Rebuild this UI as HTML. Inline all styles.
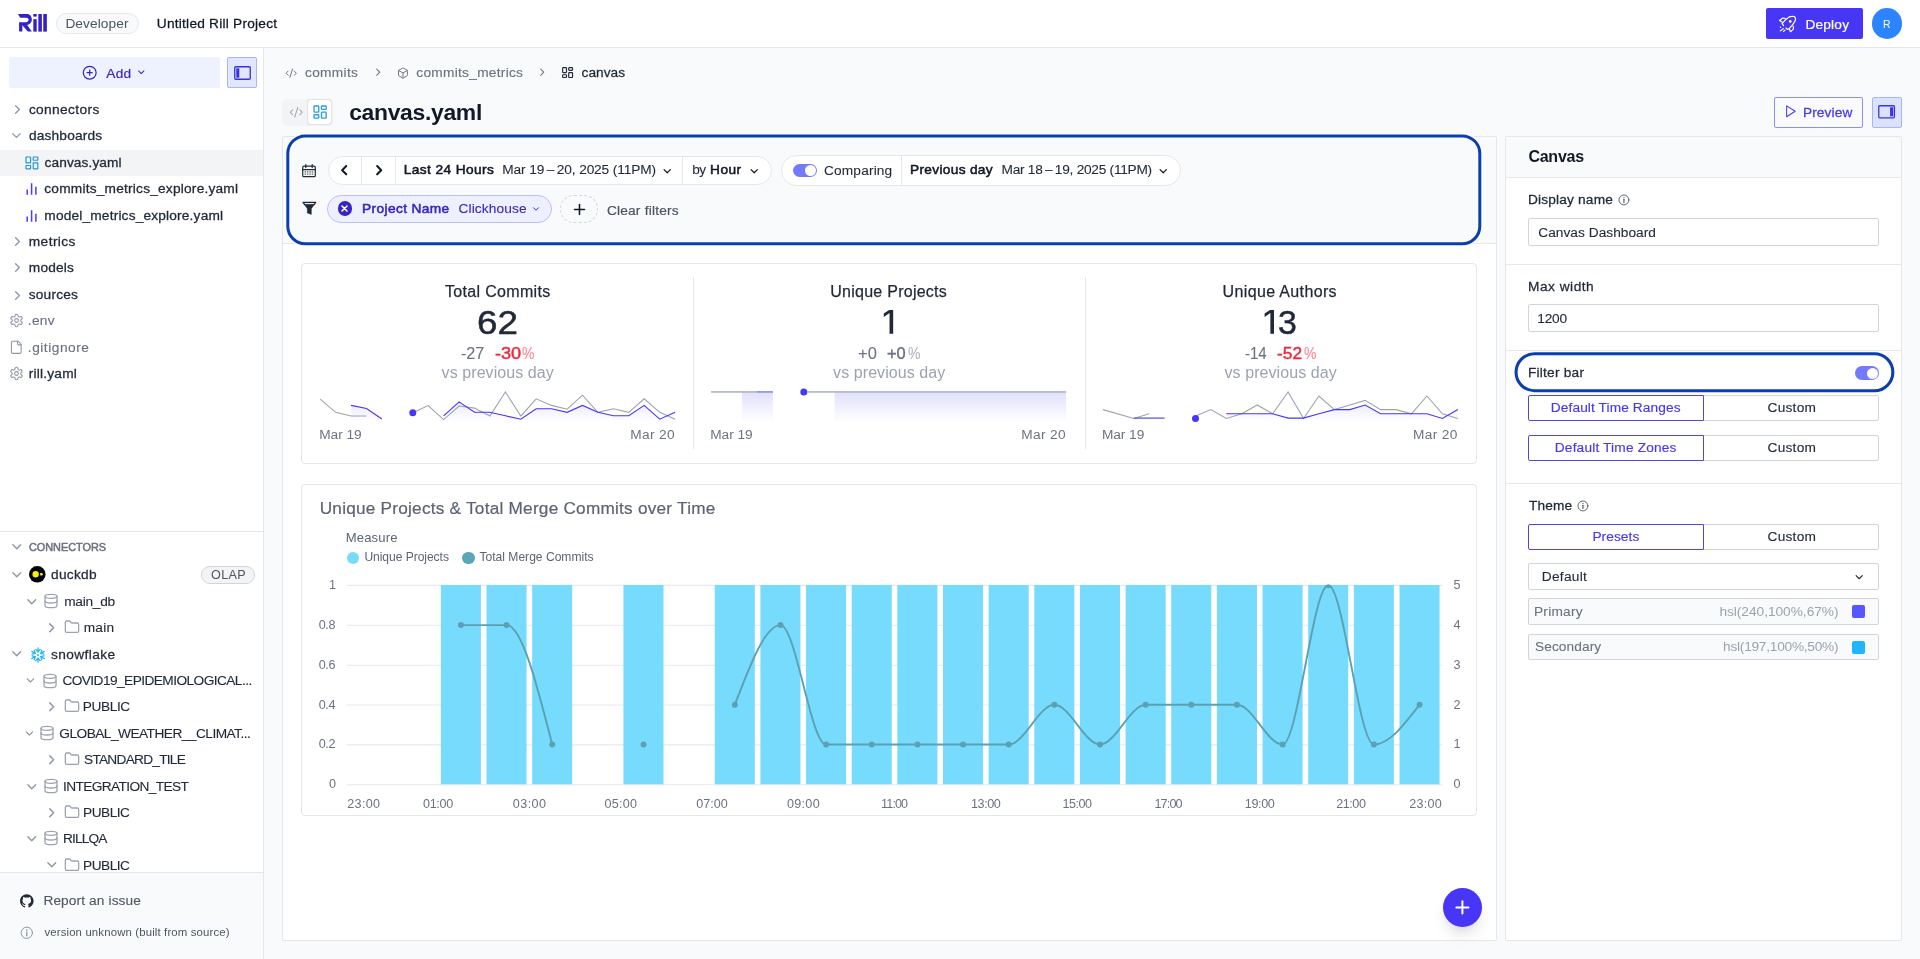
<!DOCTYPE html>
<html lang="en">
<head>
<meta charset="utf-8">
<title>Rill Developer - canvas.yaml</title>
<style>
*{box-sizing:border-box;margin:0;padding:0}
html,body{width:1920px;height:959px;overflow:hidden;background:#f9fafb;
font-family:"Liberation Sans",sans-serif;}
body{position:relative;will-change:transform}
div,span,svg,h1,h2,label,button,a,li,p{position:absolute;display:block}
.t{white-space:pre;}
svg{overflow:visible}
</style>
</head>
<body>
<!-- header -->
<div style="left:0px;top:0px;width:1920px;height:47px;background:#ffffff;"></div>
<div style="left:0px;top:47px;width:1920px;height:1px;background:#e5e7eb;"></div>
<svg style="left:18.07px;top:14.07px" width="28.88" height="17.63" viewBox="150 150 1065 650" fill="#3322c6"><path d="M150 150H480C600 150 660 250 660 360C660 450 600 530 490 560L660 800H510L310 565V800H190V450H460C510 450 540 410 540 365C540 320 510 290 460 290H230Z"/><rect x="715" y="150" width="125" height="95"/><rect x="715" y="340" width="125" height="460"/><rect x="900" y="150" width="130" height="650"/><rect x="1082" y="150" width="133" height="650"/></svg>
<div style="left:56.3px;top:13.3px;width:82.5px;height:21.2px;background:#f9fafb;border:1px solid #e5e7eb;border-radius:11px;"></div>
<span class="t" id="t0" style="font-size:13.7px;line-height:1;font-weight:400;color:#4b5563;top:17px;left:65.40px;letter-spacing:0.084px;">Developer</span>
<span class="t" id="t1" style="font-size:13.7px;line-height:1;font-weight:500;color:#111827;-webkit-text-stroke:0.26px #111827;top:17px;left:156.80px;letter-spacing:0.234px;">Untitled Rill Project</span>
<div style="left:1766px;top:8px;width:97px;height:31px;background:#4736f5;border-radius:2px;"></div>
<svg style="left:1774px;top:10px" width="30" height="26" viewBox="0 0 1107 959" fill="none" stroke="#fff" stroke-width="44" stroke-linecap="round" stroke-linejoin="round"><path d="M350 575L300 495Q420 340 560 255Q660 220 745 240Q800 280 795 350Q770 470 560 690L500 718L440 665"/><circle cx="600" cy="420" r="48" fill="#fff" stroke="none"/><path d="M300 440L205 385L310 305Q370 295 420 320"/><path d="M560 695L610 800L705 715Q735 650 700 590"/><circle cx="240" cy="640" r="28" fill="#fff" stroke="none"/><path d="M232 770L340 690M352 790L400 745"/></svg>
<span class="t" id="t2" style="font-size:13.7px;line-height:1;font-weight:500;color:#ffffff;-webkit-text-stroke:0.2px #ffffff;top:18px;left:1805.40px;letter-spacing:0.207px;">Deploy</span>
<div style="left:1871.7px;top:8px;width:30.8px;height:30.8px;background:#2d84ff;border-radius:16px;"></div>
<span class="t" id="t3" style="font-size:11.8px;line-height:1;font-weight:400;color:#ffffff;top:19px;left:1883.40px;transform-origin:0 0;transform:scaleX(0.8875);">R</span>
<!-- sidebar -->
<div style="left:0px;top:48px;width:263px;height:911px;background:#ffffff;"></div>
<div style="left:263px;top:48px;width:1px;height:911px;background:#e5e7eb;"></div>
<div style="left:9px;top:57.2px;width:211px;height:30.6px;background:#eef2ff;border-radius:2px;"></div>
<svg style="left:81.5px;top:65px;" width="15.4" height="15.4" viewBox="0 0 24 24" fill="none" stroke="#3524c7" stroke-width="1.9" stroke-linecap="round" stroke-linejoin="round"><circle cx="12" cy="12" r="10"/><path d="M8 12h8"/><path d="M12 8v8"/></svg>
<span class="t" id="t4" style="font-size:13.7px;line-height:1;font-weight:500;color:#3524c7;-webkit-text-stroke:0.2px #3524c7;top:67px;left:106.20px;letter-spacing:0.329px;">Add</span>
<svg style="left:135.5px;top:67.3px;" width="10.5" height="10.5" viewBox="0 0 24 24" fill="none" stroke="#3524c7" stroke-width="2.4" stroke-linecap="round" stroke-linejoin="round"><path d="m6 9 6 6 6-6"/></svg>
<div style="left:227px;top:57.2px;width:30px;height:30.6px;background:#e0e7ff;border:1px solid #a5b4fc;border-radius:2px;"></div>
<svg style="left:233.6px;top:65.6px" width="17" height="14" viewBox="0 0 17 14" fill="none" stroke="#3b2fe0" stroke-width="1.3"><rect x="0.75" y="0.75" width="15.5" height="12.5" rx="1"/><rect x="2.3" y="2.3" width="3" height="9.4" fill="#3b2fe0" stroke="none"/></svg>
<svg style="left:9.7px;top:102.0px;" width="15" height="15" viewBox="0 0 24 24" fill="none" stroke="#8f98a7" stroke-width="2.2" stroke-linecap="round" stroke-linejoin="round"><path d="m9 18 6-6-6-6"/></svg>
<span class="t" id="t5" style="font-size:13.7px;line-height:1;font-weight:500;color:#1f2937;-webkit-text-stroke:0.3px #1f2937;top:103px;left:28.90px;letter-spacing:0.388px;">connectors</span>
<svg style="left:9.3px;top:127.79999999999998px;" width="15" height="15" viewBox="0 0 24 24" fill="none" stroke="#8f98a7" stroke-width="2.2" stroke-linecap="round" stroke-linejoin="round"><path d="m6 9 6 6 6-6"/></svg>
<span class="t" id="t6" style="font-size:13.7px;line-height:1;font-weight:500;color:#1f2937;-webkit-text-stroke:0.3px #1f2937;top:129px;left:28.90px;letter-spacing:0.190px;">dashboards</span>
<div style="left:0px;top:150.2px;width:263px;height:25.6px;background:#f3f4f6;"></div>
<svg style="left:24.0px;top:154.6px;stroke-linejoin:miter;" width="15.8" height="15.8" viewBox="0 0 24 24" fill="none" stroke="#2395d8" stroke-width="1.8" stroke-linecap="round" stroke-linejoin="round"><rect width="7" height="9" x="3" y="3" rx="0.3"/><rect width="7" height="5" x="14" y="3" rx="0.3"/><rect width="7" height="9" x="14" y="12" rx="0.3"/><rect width="7" height="5" x="3" y="16" rx="0.3"/></svg>
<span class="t" id="t7" style="font-size:13.7px;line-height:1;font-weight:500;color:#1f2937;-webkit-text-stroke:0.3px #1f2937;top:156px;left:44.50px;letter-spacing:0.107px;">canvas.yaml</span>
<svg style="left:26px;top:182.0px" width="11" height="13" viewBox="0 0 11 13" fill="none" stroke="#4a3df5" stroke-width="1.5"><path d="M1.2 7.5v5.2M5.6 1.2v11.5M9.9 4.8v7.9"/></svg>
<span class="t" id="t8" style="font-size:13.7px;line-height:1;font-weight:500;color:#1f2937;-webkit-text-stroke:0.3px #1f2937;top:182px;left:44.30px;letter-spacing:0.217px;">commits_metrics_explore.yaml</span>
<svg style="left:26px;top:209.2px" width="11" height="13" viewBox="0 0 11 13" fill="none" stroke="#4a3df5" stroke-width="1.5"><path d="M1.2 7.5v5.2M5.6 1.2v11.5M9.9 4.8v7.9"/></svg>
<span class="t" id="t9" style="font-size:13.7px;line-height:1;font-weight:500;color:#1f2937;-webkit-text-stroke:0.3px #1f2937;top:209px;left:44.30px;letter-spacing:0.182px;">model_metrics_explore.yaml</span>
<svg style="left:9.7px;top:234.0px;" width="15" height="15" viewBox="0 0 24 24" fill="none" stroke="#8f98a7" stroke-width="2.2" stroke-linecap="round" stroke-linejoin="round"><path d="m9 18 6-6-6-6"/></svg>
<span class="t" id="t10" style="font-size:13.7px;line-height:1;font-weight:500;color:#1f2937;-webkit-text-stroke:0.3px #1f2937;top:235px;left:28.80px;letter-spacing:0.423px;">metrics</span>
<svg style="left:9.7px;top:260.4px;" width="15" height="15" viewBox="0 0 24 24" fill="none" stroke="#8f98a7" stroke-width="2.2" stroke-linecap="round" stroke-linejoin="round"><path d="m9 18 6-6-6-6"/></svg>
<span class="t" id="t11" style="font-size:13.7px;line-height:1;font-weight:500;color:#1f2937;-webkit-text-stroke:0.3px #1f2937;top:261px;left:28.80px;letter-spacing:0.184px;">models</span>
<svg style="left:9.7px;top:287.49999999999994px;" width="15" height="15" viewBox="0 0 24 24" fill="none" stroke="#8f98a7" stroke-width="2.2" stroke-linecap="round" stroke-linejoin="round"><path d="m9 18 6-6-6-6"/></svg>
<span class="t" id="t12" style="font-size:13.7px;line-height:1;font-weight:500;color:#1f2937;-webkit-text-stroke:0.3px #1f2937;top:288px;left:28.80px;letter-spacing:0.186px;">sources</span>
<svg style="left:9.1px;top:313.1px;" width="15" height="15" viewBox="0 0 24 24" fill="none" stroke="#8d96a4" stroke-width="1.7" stroke-linecap="round" stroke-linejoin="round"><path d="M12.22 2h-.44a2 2 0 0 0-2 2v.18a2 2 0 0 1-1 1.73l-.43.25a2 2 0 0 1-2 0l-.15-.08a2 2 0 0 0-2.73.73l-.22.38a2 2 0 0 0 .73 2.73l.15.1a2 2 0 0 1 1 1.72v.51a2 2 0 0 1-1 1.74l-.15.09a2 2 0 0 0-.73 2.73l.22.38a2 2 0 0 0 2.73.73l.15-.08a2 2 0 0 1 2 0l.43.25a2 2 0 0 1 1 1.73V20a2 2 0 0 0 2 2h.44a2 2 0 0 0 2-2v-.18a2 2 0 0 1 1-1.73l.43-.25a2 2 0 0 1 2 0l.15.08a2 2 0 0 0 2.73-.73l.22-.39a2 2 0 0 0-.73-2.73l-.15-.08a2 2 0 0 1-1-1.74v-.5a2 2 0 0 1 1-1.74l.15-.09a2 2 0 0 0 .73-2.73l-.22-.38a2 2 0 0 0-2.73-.73l-.15.08a2 2 0 0 1-2 0l-.43-.25a2 2 0 0 1-1-1.73V4a2 2 0 0 0-2-2z"/><circle cx="12" cy="12" r="3"/></svg>
<span class="t" id="t13" style="font-size:13.7px;line-height:1;font-weight:400;color:#6b7280;-webkit-text-stroke:0.15px #6b7280;top:314px;left:27.80px;letter-spacing:0.324px;">.env</span>
<svg style="left:9.4px;top:340.4px;" width="14.6" height="14.6" viewBox="0 0 24 24" fill="none" stroke="#8d96a4" stroke-width="1.7" stroke-linecap="round" stroke-linejoin="round"><path d="M15 2H6a2 2 0 0 0-2 2v16a2 2 0 0 0 2 2h12a2 2 0 0 0 2-2V7Z"/><path d="M14 2v4a2 2 0 0 0 2 2h4"/></svg>
<span class="t" id="t14" style="font-size:13.7px;line-height:1;font-weight:400;color:#6b7280;-webkit-text-stroke:0.15px #6b7280;top:341px;left:27.80px;letter-spacing:0.534px;">.gitignore</span>
<svg style="left:9.1px;top:365.90000000000003px;" width="15" height="15" viewBox="0 0 24 24" fill="none" stroke="#8d96a4" stroke-width="1.7" stroke-linecap="round" stroke-linejoin="round"><path d="M12.22 2h-.44a2 2 0 0 0-2 2v.18a2 2 0 0 1-1 1.73l-.43.25a2 2 0 0 1-2 0l-.15-.08a2 2 0 0 0-2.73.73l-.22.38a2 2 0 0 0 .73 2.73l.15.1a2 2 0 0 1 1 1.72v.51a2 2 0 0 1-1 1.74l-.15.09a2 2 0 0 0-.73 2.73l.22.38a2 2 0 0 0 2.73.73l.15-.08a2 2 0 0 1 2 0l.43.25a2 2 0 0 1 1 1.73V20a2 2 0 0 0 2 2h.44a2 2 0 0 0 2-2v-.18a2 2 0 0 1 1-1.73l.43-.25a2 2 0 0 1 2 0l.15.08a2 2 0 0 0 2.73-.73l.22-.39a2 2 0 0 0-.73-2.73l-.15-.08a2 2 0 0 1-1-1.74v-.5a2 2 0 0 1 1-1.74l.15-.09a2 2 0 0 0 .73-2.73l-.22-.38a2 2 0 0 0-2.73-.73l-.15.08a2 2 0 0 1-2 0l-.43-.25a2 2 0 0 1-1-1.73V4a2 2 0 0 0-2-2z"/><circle cx="12" cy="12" r="3"/></svg>
<span class="t" id="t15" style="font-size:13.7px;line-height:1;font-weight:500;color:#1f2937;-webkit-text-stroke:0.3px #1f2937;top:367px;left:28.80px;letter-spacing:0.207px;">rill.yaml</span>
<div style="left:0px;top:531px;width:263px;height:1px;background:#e5e7eb;"></div>
<svg style="left:8.95px;top:538.85px;" width="15.5" height="15.5" viewBox="0 0 24 24" fill="none" stroke="#8f98a7" stroke-width="2.2" stroke-linecap="round" stroke-linejoin="round"><path d="m6 9 6 6 6-6"/></svg>
<span class="t" id="t16" style="font-size:10.9px;line-height:1;font-weight:400;color:#6b7280;-webkit-text-stroke:0.5px #6b7280;top:542px;left:28.90px;letter-spacing:-0.015px;">CONNECTORS</span>
<svg style="left:8.95px;top:566.85px;" width="15.5" height="15.5" viewBox="0 0 24 24" fill="none" stroke="#8f98a7" stroke-width="2.2" stroke-linecap="round" stroke-linejoin="round"><path d="m6 9 6 6 6-6"/></svg>
<svg style="left:29.3px;top:566.4px" width="16.6" height="16.6" viewBox="0 0 24 24"><circle cx="12" cy="12" r="12" fill="#000"/><circle cx="9.6" cy="12" r="4.6" fill="#fff100"/><path d="M16.2 10.3h2a1.7 1.7 0 0 1 0 3.4h-2z" fill="#fff100"/></svg>
<span class="t" id="t17" style="font-size:13.7px;line-height:1;font-weight:500;color:#1f2937;-webkit-text-stroke:0.26px #1f2937;top:568px;left:51.00px;letter-spacing:0.295px;">duckdb</span>
<div style="left:200.9px;top:566px;width:54.1px;height:17.7px;background:#f3f4f6;border:1px solid #d1d5db;border-radius:9px;"></div>
<span class="t" id="t18" style="font-size:12.6px;line-height:1;font-weight:400;color:#4b5563;top:569px;left:211.00px;letter-spacing:0.333px;">OLAP</span>
<svg style="left:23.85px;top:593.65px;" width="15.5" height="15.5" viewBox="0 0 24 24" fill="none" stroke="#8f98a7" stroke-width="2.2" stroke-linecap="round" stroke-linejoin="round"><path d="m6 9 6 6 6-6"/></svg>
<svg style="left:43.400000000000006px;top:593.1999999999999px;" width="16" height="16" viewBox="0 0 24 24" fill="none" stroke="#9ca3af" stroke-width="1.9" stroke-linecap="round" stroke-linejoin="round"><ellipse cx="12" cy="5" rx="9" ry="3"/><path d="M3 5V19A9 3 0 0 0 21 19V5"/><path d="M3 12A9 3 0 0 0 21 12"/></svg>
<span class="t" id="t19" style="font-size:13.7px;line-height:1;font-weight:400;color:#1f2937;-webkit-text-stroke:0.12px #1f2937;top:595px;left:64.20px;letter-spacing:-0.249px;">main_db</span>
<svg style="left:44.25px;top:620.1500000000001px;" width="15.5" height="15.5" viewBox="0 0 24 24" fill="none" stroke="#8f98a7" stroke-width="2.2" stroke-linecap="round" stroke-linejoin="round"><path d="m9 18 6-6-6-6"/></svg>
<svg style="left:63.7px;top:619.4000000000001px;" width="16" height="16" viewBox="0 0 24 24" fill="none" stroke="#9ca3af" stroke-width="1.9" stroke-linecap="round" stroke-linejoin="round"><path d="M20 20a2 2 0 0 0 2-2V8a2 2 0 0 0-2-2h-7.9a2 2 0 0 1-1.69-.9L9.6 3.9A2 2 0 0 0 7.93 3H4a2 2 0 0 0-2 2v13a2 2 0 0 0 2 2Z"/></svg>
<span class="t" id="t20" style="font-size:13.7px;line-height:1;font-weight:400;color:#1f2937;-webkit-text-stroke:0.12px #1f2937;top:621px;left:83.70px;letter-spacing:0.248px;">main</span>
<svg style="left:8.95px;top:646.45px;" width="15.5" height="15.5" viewBox="0 0 24 24" fill="none" stroke="#8f98a7" stroke-width="2.2" stroke-linecap="round" stroke-linejoin="round"><path d="m6 9 6 6 6-6"/></svg>
<svg style="left:29.8px;top:646.5px" width="16" height="16" viewBox="0 0 24 24" fill="none" stroke="#29b5e8" stroke-width="1.9" stroke-linecap="round" stroke-linejoin="round"><g transform="rotate(0 12 12)"><path d="M12 1.2v6.3M8.6 3.6 12 7.2l3.4-3.6" /></g><g transform="rotate(60 12 12)"><path d="M12 1.2v6.3M8.6 3.6 12 7.2l3.4-3.6" /></g><g transform="rotate(120 12 12)"><path d="M12 1.2v6.3M8.6 3.6 12 7.2l3.4-3.6" /></g><g transform="rotate(180 12 12)"><path d="M12 1.2v6.3M8.6 3.6 12 7.2l3.4-3.6" /></g><g transform="rotate(240 12 12)"><path d="M12 1.2v6.3M8.6 3.6 12 7.2l3.4-3.6" /></g><g transform="rotate(300 12 12)"><path d="M12 1.2v6.3M8.6 3.6 12 7.2l3.4-3.6" /></g><path d="M12 10.3 13.7 12 12 13.7 10.3 12z" fill="#29b5e8" stroke="none"/></svg>
<span class="t" id="t21" style="font-size:13.7px;line-height:1;font-weight:500;color:#1f2937;-webkit-text-stroke:0.26px #1f2937;top:648px;left:51.00px;letter-spacing:0.393px;">snowflake</span>
<svg style="left:24.4px;top:674.4000000000001px;" width="12.8" height="12.8" viewBox="0 0 24 24" fill="none" stroke="#8f98a7" stroke-width="2.2" stroke-linecap="round" stroke-linejoin="round"><path d="m6 9 6 6 6-6"/></svg>
<svg style="left:41.7px;top:672.6px;" width="16" height="16" viewBox="0 0 24 24" fill="none" stroke="#9ca3af" stroke-width="1.9" stroke-linecap="round" stroke-linejoin="round"><ellipse cx="12" cy="5" rx="9" ry="3"/><path d="M3 5V19A9 3 0 0 0 21 19V5"/><path d="M3 12A9 3 0 0 0 21 12"/></svg>
<span class="t" id="t22" style="font-size:13.7px;line-height:1;font-weight:400;color:#1f2937;-webkit-text-stroke:0.12px #1f2937;top:674px;left:62.40px;letter-spacing:-0.562px;">COVID19_EPIDEMIOLOGICAL...</span>
<svg style="left:44.25px;top:699.0500000000001px;" width="15.5" height="15.5" viewBox="0 0 24 24" fill="none" stroke="#8f98a7" stroke-width="2.2" stroke-linecap="round" stroke-linejoin="round"><path d="m9 18 6-6-6-6"/></svg>
<svg style="left:63.7px;top:698.3000000000001px;" width="16" height="16" viewBox="0 0 24 24" fill="none" stroke="#9ca3af" stroke-width="1.9" stroke-linecap="round" stroke-linejoin="round"><path d="M20 20a2 2 0 0 0 2-2V8a2 2 0 0 0-2-2h-7.9a2 2 0 0 1-1.69-.9L9.6 3.9A2 2 0 0 0 7.93 3H4a2 2 0 0 0-2 2v13a2 2 0 0 0 2 2Z"/></svg>
<span class="t" id="t23" style="font-size:13.7px;line-height:1;font-weight:400;color:#1f2937;-webkit-text-stroke:0.12px #1f2937;top:700px;left:82.80px;letter-spacing:-0.412px;">PUBLIC</span>
<svg style="left:22.9px;top:726.9000000000001px;" width="12.8" height="12.8" viewBox="0 0 24 24" fill="none" stroke="#8f98a7" stroke-width="2.2" stroke-linecap="round" stroke-linejoin="round"><path d="m6 9 6 6 6-6"/></svg>
<svg style="left:38.900000000000006px;top:725.1px;" width="16" height="16" viewBox="0 0 24 24" fill="none" stroke="#9ca3af" stroke-width="1.9" stroke-linecap="round" stroke-linejoin="round"><ellipse cx="12" cy="5" rx="9" ry="3"/><path d="M3 5V19A9 3 0 0 0 21 19V5"/><path d="M3 12A9 3 0 0 0 21 12"/></svg>
<span class="t" id="t24" style="font-size:13.7px;line-height:1;font-weight:400;color:#1f2937;-webkit-text-stroke:0.12px #1f2937;top:727px;left:59.30px;letter-spacing:-0.525px;">GLOBAL_WEATHER__CLIMAT...</span>
<svg style="left:44.25px;top:751.95px;" width="15.5" height="15.5" viewBox="0 0 24 24" fill="none" stroke="#8f98a7" stroke-width="2.2" stroke-linecap="round" stroke-linejoin="round"><path d="m9 18 6-6-6-6"/></svg>
<svg style="left:63.7px;top:751.2px;" width="16" height="16" viewBox="0 0 24 24" fill="none" stroke="#9ca3af" stroke-width="1.9" stroke-linecap="round" stroke-linejoin="round"><path d="M20 20a2 2 0 0 0 2-2V8a2 2 0 0 0-2-2h-7.9a2 2 0 0 1-1.69-.9L9.6 3.9A2 2 0 0 0 7.93 3H4a2 2 0 0 0-2 2v13a2 2 0 0 0 2 2Z"/></svg>
<span class="t" id="t25" style="font-size:13.7px;line-height:1;font-weight:400;color:#1f2937;-webkit-text-stroke:0.12px #1f2937;top:753px;left:84.00px;letter-spacing:-0.747px;">STANDARD_TILE</span>
<svg style="left:23.75px;top:778.5500000000001px;" width="15.5" height="15.5" viewBox="0 0 24 24" fill="none" stroke="#8f98a7" stroke-width="2.2" stroke-linecap="round" stroke-linejoin="round"><path d="m6 9 6 6 6-6"/></svg>
<svg style="left:43.400000000000006px;top:778.1px;" width="16" height="16" viewBox="0 0 24 24" fill="none" stroke="#9ca3af" stroke-width="1.9" stroke-linecap="round" stroke-linejoin="round"><ellipse cx="12" cy="5" rx="9" ry="3"/><path d="M3 5V19A9 3 0 0 0 21 19V5"/><path d="M3 12A9 3 0 0 0 21 12"/></svg>
<span class="t" id="t26" style="font-size:13.7px;line-height:1;font-weight:400;color:#1f2937;-webkit-text-stroke:0.12px #1f2937;top:780px;left:63.00px;letter-spacing:-0.623px;">INTEGRATION_TEST</span>
<svg style="left:44.25px;top:804.75px;" width="15.5" height="15.5" viewBox="0 0 24 24" fill="none" stroke="#8f98a7" stroke-width="2.2" stroke-linecap="round" stroke-linejoin="round"><path d="m9 18 6-6-6-6"/></svg>
<svg style="left:63.7px;top:804.0px;" width="16" height="16" viewBox="0 0 24 24" fill="none" stroke="#9ca3af" stroke-width="1.9" stroke-linecap="round" stroke-linejoin="round"><path d="M20 20a2 2 0 0 0 2-2V8a2 2 0 0 0-2-2h-7.9a2 2 0 0 1-1.69-.9L9.6 3.9A2 2 0 0 0 7.93 3H4a2 2 0 0 0-2 2v13a2 2 0 0 0 2 2Z"/></svg>
<span class="t" id="t27" style="font-size:13.7px;line-height:1;font-weight:400;color:#1f2937;-webkit-text-stroke:0.12px #1f2937;top:806px;left:83.00px;letter-spacing:-0.492px;">PUBLIC</span>
<svg style="left:23.75px;top:830.85px;" width="15.5" height="15.5" viewBox="0 0 24 24" fill="none" stroke="#8f98a7" stroke-width="2.2" stroke-linecap="round" stroke-linejoin="round"><path d="m6 9 6 6 6-6"/></svg>
<svg style="left:43.400000000000006px;top:830.4px;" width="16" height="16" viewBox="0 0 24 24" fill="none" stroke="#9ca3af" stroke-width="1.9" stroke-linecap="round" stroke-linejoin="round"><ellipse cx="12" cy="5" rx="9" ry="3"/><path d="M3 5V19A9 3 0 0 0 21 19V5"/><path d="M3 12A9 3 0 0 0 21 12"/></svg>
<span class="t" id="t28" style="font-size:13.7px;line-height:1;font-weight:400;color:#1f2937;-webkit-text-stroke:0.12px #1f2937;top:832px;left:63.00px;letter-spacing:-0.872px;">RILLQA</span>
<svg style="left:43.65px;top:856.65px;" width="15.5" height="15.5" viewBox="0 0 24 24" fill="none" stroke="#8f98a7" stroke-width="2.2" stroke-linecap="round" stroke-linejoin="round"><path d="m6 9 6 6 6-6"/></svg>
<svg style="left:63.7px;top:856.7px;" width="16" height="16" viewBox="0 0 24 24" fill="none" stroke="#9ca3af" stroke-width="1.9" stroke-linecap="round" stroke-linejoin="round"><path d="M20 20a2 2 0 0 0 2-2V8a2 2 0 0 0-2-2h-7.9a2 2 0 0 1-1.69-.9L9.6 3.9A2 2 0 0 0 7.93 3H4a2 2 0 0 0-2 2v13a2 2 0 0 0 2 2Z"/></svg>
<span class="t" id="t29" style="font-size:13.7px;line-height:1;font-weight:400;color:#1f2937;-webkit-text-stroke:0.12px #1f2937;top:859px;left:83.00px;letter-spacing:-0.492px;">PUBLIC</span>
<div style="left:0px;top:872px;width:263px;height:87px;background:#f9fafb;"></div>
<div style="left:0px;top:872px;width:263px;height:1px;background:#e5e7eb;"></div>
<svg style="left:20px;top:894.3px;" width="13.6" height="13.6" viewBox="0 0 24 24" fill="#1f2937" stroke="none" stroke-width="2" stroke-linecap="round" stroke-linejoin="round"><path d="M12 .297c-6.63 0-12 5.373-12 12 0 5.303 3.438 9.8 8.205 11.385.6.113.82-.258.82-.577 0-.285-.01-1.04-.015-2.04-3.338.724-4.042-1.61-4.042-1.61C4.422 18.07 3.633 17.7 3.633 17.7c-1.087-.744.084-.729.084-.729 1.205.084 1.838 1.236 1.838 1.236 1.07 1.835 2.809 1.305 3.495.998.108-.776.417-1.305.76-1.605-2.665-.3-5.466-1.332-5.466-5.93 0-1.31.465-2.38 1.235-3.22-.135-.303-.54-1.523.105-3.176 0 0 1.005-.322 3.3 1.23.96-.267 1.98-.399 3-.405 1.02.006 2.04.138 3 .405 2.28-1.552 3.285-1.23 3.285-1.23.645 1.653.24 2.873.12 3.176.765.84 1.23 1.91 1.23 3.22 0 4.61-2.805 5.625-5.475 5.92.42.36.81 1.096.81 2.22 0 1.606-.015 2.896-.015 3.286 0 .315.21.69.825.57C20.565 22.092 24 17.592 24 12.297c0-6.627-5.373-12-12-12"/></svg>
<span class="t" id="t30" style="font-size:13.7px;line-height:1;font-weight:400;color:#4b5563;-webkit-text-stroke:0.1px #4b5563;top:894px;left:43.40px;letter-spacing:0.118px;">Report an issue</span>
<svg style="left:20px;top:925.8px;" width="13.6" height="13.6" viewBox="0 0 24 24" fill="none" stroke="#8b93a1" stroke-width="1.7" stroke-linecap="round" stroke-linejoin="round"><circle cx="12" cy="12" r="10"/><path d="M12 17.2v-6.4" stroke-width="2.3"/><circle cx="12" cy="7.3" r="1.35" fill="#8b93a1" stroke="none"/></svg>
<span class="t" id="t31" style="font-size:11.4px;line-height:1;font-weight:400;color:#4b5563;top:927px;left:44.40px;letter-spacing:0.140px;">version unknown (built from source)</span>
<!-- breadcrumbs -->
<svg style="left:285.4px;top:66.6px;" width="12.4" height="12.4" viewBox="0 0 24 24" fill="none" stroke="#6b7280" stroke-width="1.9" stroke-linecap="round" stroke-linejoin="round"><path d="m18 16 4-4-4-4"/><path d="m6 8-4 4 4 4"/><path d="m14.5 4-5 16"/></svg>
<span class="t" id="t32" style="font-size:13.7px;line-height:1;font-weight:400;color:#6b7280;-webkit-text-stroke:0.15px #6b7280;top:66px;left:305.00px;letter-spacing:0.333px;">commits</span>
<svg style="left:371.6px;top:66.3px;" width="12.4" height="12.4" viewBox="0 0 24 24" fill="none" stroke="#6b7280" stroke-width="2" stroke-linecap="round" stroke-linejoin="round"><path d="m9 18 6-6-6-6"/></svg>
<svg style="left:396.6px;top:66.5px;" width="12" height="12" viewBox="0 0 24 24" fill="none" stroke="#6b7280" stroke-width="1.9" stroke-linecap="round" stroke-linejoin="round"><path d="M21 8a2 2 0 0 0-1-1.73l-7-4a2 2 0 0 0-2 0l-7 4A2 2 0 0 0 3 8v8a2 2 0 0 0 1 1.73l7 4a2 2 0 0 0 2 0l7-4A2 2 0 0 0 21 16Z"/><path d="m3.3 7 8.7 5 8.7-5"/><path d="M12 22V12"/></svg>
<span class="t" id="t33" style="font-size:13.7px;line-height:1;font-weight:400;color:#6b7280;-webkit-text-stroke:0.15px #6b7280;top:66px;left:416.30px;letter-spacing:0.284px;">commits_metrics</span>
<svg style="left:536.4px;top:66.3px;" width="12.4" height="12.4" viewBox="0 0 24 24" fill="none" stroke="#6b7280" stroke-width="2" stroke-linecap="round" stroke-linejoin="round"><path d="m9 18 6-6-6-6"/></svg>
<svg style="left:560.8px;top:65.8px;" width="13.2" height="13.2" viewBox="0 0 24 24" fill="none" stroke="#1f2937" stroke-width="2.1" stroke-linecap="round" stroke-linejoin="round"><rect width="7" height="9" x="3" y="3" rx="1"/><rect width="7" height="5" x="14" y="3" rx="1"/><rect width="7" height="9" x="14" y="12" rx="1"/><rect width="7" height="5" x="3" y="16" rx="1"/></svg>
<span class="t" id="t34" style="font-size:13.7px;line-height:1;font-weight:500;color:#1f2937;-webkit-text-stroke:0.26px #1f2937;top:66px;left:581.50px;letter-spacing:0.035px;">canvas</span>
<div style="left:282px;top:98.5px;width:50.5px;height:27px;background:#f3f4f6;border-radius:5px;"></div>
<svg style="left:288.8px;top:105px;" width="14.5" height="14.5" viewBox="0 0 24 24" fill="none" stroke="#9ca3af" stroke-width="1.7" stroke-linecap="round" stroke-linejoin="round"><path d="m18 16 4-4-4-4"/><path d="m6 8-4 4 4 4"/><path d="m14.5 4-5 16"/></svg>
<div style="left:307.3px;top:99.4px;width:25px;height:25.2px;background:#ffffff;border:1px solid #e2e5ea;border-radius:4px;box-shadow:0 0 1px rgba(0,0,0,.15);"></div>
<svg style="left:311.9px;top:103.9px;" width="16.2" height="16.2" viewBox="0 0 24 24" fill="none" stroke="#2b9fd9" stroke-width="2.0" stroke-linecap="round" stroke-linejoin="round"><rect width="7" height="9" x="3" y="3" rx="1"/><rect width="7" height="5" x="14" y="3" rx="1"/><rect width="7" height="9" x="14" y="12" rx="1"/><rect width="7" height="5" x="3" y="16" rx="1"/></svg>
<h1 class="t" id="t35" style="font-size:22.9px;line-height:1;font-weight:700;color:#111827;top:101px;left:349.20px;letter-spacing:-0.311px;">canvas.yaml</h1>
<div style="left:1774px;top:97.2px;width:89.2px;height:30.4px;border:1px solid #8f8df9;border-radius:2px;"></div>
<svg style="left:1782.9px;top:104.2px;" width="14.6" height="14.6" viewBox="0 0 24 24" fill="none" stroke="#4736f5" stroke-width="1.7" stroke-linecap="round" stroke-linejoin="round"><polygon points="6 3 20 12 6 21 6 3"/></svg>
<span class="t" id="t36" style="font-size:13.7px;line-height:1;font-weight:500;color:#4736f5;-webkit-text-stroke:0.26px #4736f5;top:106px;left:1802.90px;letter-spacing:0.117px;">Preview</span>
<div style="left:1871.9px;top:97.2px;width:30.2px;height:30.4px;background:#dbe2fe;border:1px solid #a5b4fc;border-radius:2px;"></div>
<svg style="left:1878.4px;top:104.9px" width="17.2" height="13.6" viewBox="0 0 17.2 13.6" fill="none" stroke="#3d32e0" stroke-width="1.3"><rect x="0.75" y="0.75" width="15.7" height="12.1" rx="1"/><rect x="12.1" y="2.3" width="3.1" height="9" fill="#3d32e0" stroke="none"/></svg>
<!-- canvas -->
<div style="left:282px;top:136px;width:1215px;height:805px;background:#ffffff;border:1px solid #e5e7eb;border-radius:2px;"></div>
<div style="left:283px;top:137px;width:1213px;height:106px;background:#f9fafb;"></div>
<div style="left:283px;top:243px;width:1213px;height:1px;background:#e5e7eb;"></div>
<svg style="left:0;top:0" width="1920" height="959" viewBox="0 0 1920 959" fill="none"><rect x="287.8" y="135.9" width="1192" height="107.9" rx="17.6" stroke="#ffffff" stroke-width="5.4" stroke-opacity=".85"/><rect x="287.8" y="135.9" width="1192" height="107.9" rx="17.6" stroke="#0a3fae" stroke-width="3"/></svg>
<svg style="left:302px;top:163.6px" width="14" height="14" viewBox="0 0 14 14" fill="none" stroke="#1f2937" stroke-width="1.2" stroke-linecap="round"><rect x="0.7" y="2.2" width="12.6" height="10.5" rx="1.3"/><path d="M3.8 0.6v3M10.2 0.6v3M0.7 5.6h12.6"/><path d="M3 7.9h.6M5.4 7.9h.6M7.8 7.9h.6M10.2 7.9h.6M3 10.1h.6M5.4 10.1h.6M7.8 10.1h.6M10.2 10.1h.6" stroke-width="1.1" stroke-opacity=".75"/></svg>
<div style="left:327.6px;top:156px;width:444px;height:29px;background:#ffffff;border:1px solid #e5e7eb;border-radius:14.5px;"></div>
<div style="left:361.3px;top:157px;width:1px;height:27px;background:#e5e7eb;"></div>
<div style="left:395.2px;top:157px;width:1px;height:27px;background:#e5e7eb;"></div>
<div style="left:681.9px;top:157px;width:1px;height:27px;background:#e5e7eb;"></div>
<svg style="left:335.6px;top:162.3px;" width="16.4" height="16.4" viewBox="0 0 24 24" fill="none" stroke="#111827" stroke-width="3" stroke-linecap="round" stroke-linejoin="round"><path d="m15 18-6-6 6-6"/></svg>
<svg style="left:370.6px;top:162.3px;" width="16.4" height="16.4" viewBox="0 0 24 24" fill="none" stroke="#111827" stroke-width="3" stroke-linecap="round" stroke-linejoin="round"><path d="m9 18 6-6-6-6"/></svg>
<span class="t" id="t37" style="font-size:13.7px;line-height:1;font-weight:400;color:#111827;-webkit-text-stroke:0.55px #111827;top:163px;left:403.80px;letter-spacing:0.403px;">Last 24 Hours</span>
<span class="t" id="t38" style="font-size:13.7px;line-height:1;font-weight:400;color:#1f2937;-webkit-text-stroke:0.1px #1f2937;top:163px;left:502.30px;letter-spacing:-0.129px;">Mar 19 – 20, 2025 (11PM)</span>
<svg style="left:660.5px;top:164.7px;" width="12.4" height="12.4" viewBox="0 0 24 24" fill="none" stroke="#111827" stroke-width="2.4" stroke-linecap="round" stroke-linejoin="round"><path d="m6 9 6 6 6-6"/></svg>
<span class="t" id="t39" style="font-size:13.7px;line-height:1;font-weight:400;color:#1f2937;-webkit-text-stroke:0.1px #1f2937;top:163px;left:692.20px;letter-spacing:-0.562px;">by</span>
<span class="t" id="t40" style="font-size:13.7px;line-height:1;font-weight:400;color:#111827;-webkit-text-stroke:0.55px #111827;top:163px;left:710.00px;letter-spacing:0.497px;">Hour</span>
<svg style="left:747.7px;top:164.7px;" width="12.4" height="12.4" viewBox="0 0 24 24" fill="none" stroke="#111827" stroke-width="2.4" stroke-linecap="round" stroke-linejoin="round"><path d="m6 9 6 6 6-6"/></svg>
<div style="left:781px;top:155px;width:400.4px;height:31px;background:#ffffff;border:1px solid #e5e7eb;border-radius:15.5px;"></div>
<div style="left:901.4px;top:156px;width:1px;height:29px;background:#e5e7eb;"></div>
<div style="left:792.8px;top:163.9px;width:24.3px;height:13.1px;background:#747bfb;border-radius:7px;"></div>
<div style="left:804.8px;top:164.8px;width:11.4px;height:11.4px;background:#ffffff;border-radius:6px;"></div>
<span class="t" id="t41" style="font-size:13.7px;line-height:1;font-weight:400;color:#1f2937;-webkit-text-stroke:0.1px #1f2937;top:164px;left:824.00px;letter-spacing:0.158px;">Comparing</span>
<span class="t" id="t42" style="font-size:13.7px;line-height:1;font-weight:400;color:#111827;-webkit-text-stroke:0.55px #111827;top:163px;left:910.00px;letter-spacing:0.320px;">Previous day</span>
<span class="t" id="t43" style="font-size:13.7px;line-height:1;font-weight:400;color:#1f2937;-webkit-text-stroke:0.1px #1f2937;top:163px;left:1001.50px;letter-spacing:-0.260px;">Mar 18 – 19, 2025 (11PM)</span>
<svg style="left:1156.8px;top:164.7px;" width="12.4" height="12.4" viewBox="0 0 24 24" fill="none" stroke="#111827" stroke-width="2.4" stroke-linecap="round" stroke-linejoin="round"><path d="m6 9 6 6 6-6"/></svg>
<svg style="left:301.5px;top:201.4px" width="14.87" height="14.45" viewBox="80 660 216 210" fill="none"><path d="M120 712L95 681H280L255 712" stroke="#1f2937" stroke-width="19" stroke-linejoin="round" stroke-linecap="round"/><path d="M112 708H263L216 772V856L157 834V772Z" fill="#1f2937" stroke="#1f2937" stroke-width="6" stroke-linejoin="round"/></svg>
<div style="left:327px;top:195px;width:224.7px;height:27.8px;background:#eef0ff;border:1px solid #b9c0fb;border-radius:14px;"></div>
<div style="left:337.5px;top:201.45px;width:14.6px;height:14.6px;background:#3524c7;border-radius:8px;"></div>
<svg style="left:341.3px;top:205.25px" width="7" height="7" viewBox="0 0 7 7" stroke="#fff" stroke-width="1.6" stroke-linecap="round"><path d="M1 1l5 5M6 1 1 6"/></svg>
<span class="t" id="t44" style="font-size:13.7px;line-height:1;font-weight:400;color:#3524c7;-webkit-text-stroke:0.55px #3524c7;top:202px;left:362.10px;letter-spacing:0.373px;">Project Name</span>
<span class="t" id="t45" style="font-size:13.7px;line-height:1;font-weight:400;color:#3524c7;-webkit-text-stroke:0.1px #3524c7;top:202px;left:458.50px;letter-spacing:0.129px;">Clickhouse</span>
<svg style="left:531.4px;top:203.7px;" width="10" height="10" viewBox="0 0 24 24" fill="none" stroke="#3524c7" stroke-width="2.4" stroke-linecap="round" stroke-linejoin="round"><path d="m6 9 6 6 6-6"/></svg>
<div style="left:560px;top:195px;width:37.5px;height:28px;border:1px dashed #d1d5db;border-radius:14px;"></div>
<svg style="left:570.7px;top:200.7px;" width="17" height="17" viewBox="0 0 24 24" fill="none" stroke="#111827" stroke-width="2.2" stroke-linecap="round" stroke-linejoin="round"><path d="M5 12h14"/><path d="M12 5v14"/></svg>
<span class="t" id="t46" style="font-size:13.7px;line-height:1;font-weight:400;color:#4b5563;-webkit-text-stroke:0.2px #4b5563;top:204px;left:606.90px;letter-spacing:0.207px;">Clear filters</span>
<!-- kpi -->
<div style="left:301px;top:263px;width:1176px;height:201px;background:#ffffff;border:1px solid #e5e7eb;border-radius:4px;"></div>
<div style="left:693px;top:277px;width:1px;height:172px;background:#e5e7eb;"></div>
<div style="left:1084.5px;top:277px;width:1px;height:172px;background:#e5e7eb;"></div>
<span class="t" id="t47" style="font-size:16.0px;line-height:1;font-weight:500;color:#1f2937;-webkit-text-stroke:0.25px #1f2937;top:284px;left:444.90px;letter-spacing:0.337px;">Total Commits</span>
<span class="t" id="t48" style="font-size:34.1px;line-height:1;font-weight:500;color:#1f2937;-webkit-text-stroke:0.5px #1f2937;top:305px;left:477.02px;transform-origin:0 0;transform:scaleX(1.0792);">62</span>
<span class="t" id="t49" style="font-size:16.0px;line-height:1;font-weight:400;color:#6b7280;-webkit-text-stroke:0.1px #6b7280;top:346px;left:460.60px;transform-origin:0 0;transform:scaleX(1.0075);">-27</span>
<span class="t" id="t50" style="font-size:16.0px;line-height:1;font-weight:400;color:#f0283c;-webkit-text-stroke:0.42px #f0283c;top:346px;left:494.50px;transform-origin:0 0;transform:scaleX(1.1323);">-30</span>
<span class="t" id="t51" style="font-size:16.0px;line-height:1;font-weight:400;color:#f98d96;-webkit-text-stroke:0.15px #f98d96;top:346px;left:522.30px;transform-origin:0 0;transform:scaleX(0.8786);">%</span>
<span class="t" id="t52" style="font-size:16.0px;line-height:1;font-weight:400;color:#9ca3af;top:365px;left:441.60px;letter-spacing:0.074px;">vs previous day</span>
<span class="t" id="t53" style="font-size:16.0px;line-height:1;font-weight:500;color:#1f2937;-webkit-text-stroke:0.25px #1f2937;top:284px;left:830.30px;letter-spacing:0.254px;">Unique Projects</span>
<svg style="left:0;top:0" width="1920" height="959" viewBox="0 0 1920 959"><polygon points="893.17,310.01 889.20,310.01 883.78,313.43 883.78,316.90 889.54,313.02 889.54,333.79 893.17,333.79" fill="#1f2937"/></svg>
<span class="t" id="t54" style="font-size:16.0px;line-height:1;font-weight:400;color:#6b7280;-webkit-text-stroke:0.1px #6b7280;top:346px;left:857.80px;transform-origin:0 0;transform:scaleX(1.0303);">+0</span>
<span class="t" id="t55" style="font-size:16.0px;line-height:1;font-weight:400;color:#6b7280;-webkit-text-stroke:0.42px #6b7280;top:346px;left:887.00px;transform-origin:0 0;transform:scaleX(1.0249);">+0</span>
<span class="t" id="t56" style="font-size:16.0px;line-height:1;font-weight:400;color:#b3b8c2;-webkit-text-stroke:0.15px #b3b8c2;top:346px;left:907.90px;transform-origin:0 0;transform:scaleX(0.8786);">%</span>
<span class="t" id="t57" style="font-size:16.0px;line-height:1;font-weight:400;color:#9ca3af;top:365px;left:833.10px;letter-spacing:0.074px;">vs previous day</span>
<span class="t" id="t58" style="font-size:16.0px;line-height:1;font-weight:500;color:#1f2937;-webkit-text-stroke:0.25px #1f2937;top:284px;left:1222.60px;letter-spacing:0.355px;">Unique Authors</span>
<svg style="left:0;top:0" width="1920" height="959" viewBox="0 0 1920 959"><polygon points="1274.00,310.01 1270.03,310.01 1264.61,313.43 1264.61,316.90 1270.37,313.02 1270.37,333.79 1274.00,333.79" fill="#1f2937"/></svg>
<span class="t" id="t59" style="font-size:34.1px;line-height:1;font-weight:500;color:#1f2937;-webkit-text-stroke:0.5px #1f2937;top:305px;left:1278.01px;transform-origin:0 0;transform:scaleX(0.9941);">3</span>
<span class="t" id="t60" style="font-size:16.0px;line-height:1;font-weight:400;color:#6b7280;-webkit-text-stroke:0.1px #6b7280;top:346px;left:1244.80px;transform-origin:0 0;transform:scaleX(0.9386);">-14</span>
<span class="t" id="t61" style="font-size:16.0px;line-height:1;font-weight:400;color:#f0283c;-webkit-text-stroke:0.42px #f0283c;top:346px;left:1276.80px;transform-origin:0 0;transform:scaleX(1.0850);">-52</span>
<span class="t" id="t62" style="font-size:16.0px;line-height:1;font-weight:400;color:#f98d96;-webkit-text-stroke:0.15px #f98d96;top:346px;left:1303.90px;transform-origin:0 0;transform:scaleX(0.8786);">%</span>
<span class="t" id="t63" style="font-size:16.0px;line-height:1;font-weight:400;color:#9ca3af;top:365px;left:1224.50px;letter-spacing:0.074px;">vs previous day</span>
<div style="left:1443px;top:888px;width:39px;height:39px;background:#4736f5;border-radius:20px;box-shadow:0 10px 15px -3px rgba(0,0,0,.12),0 4px 6px -4px rgba(0,0,0,.1);"></div>
<svg style="left:1452.1px;top:897.1px;" width="20.8" height="20.8" viewBox="0 0 24 24" fill="none" stroke="#ffffff" stroke-width="2.3" stroke-linecap="round" stroke-linejoin="round"><path d="M5 12h14"/><path d="M12 5v14"/></svg>
<!-- sparklines -->
<svg style="left:0;top:0" width="1920" height="959" viewBox="0 0 1920 959" fill="none"><defs><linearGradient id="sg1" gradientUnits="userSpaceOnUse" x1="0" y1="392" x2="0" y2="422"><stop offset="0" stop-color="#6366f1" stop-opacity=".2"/><stop offset="1" stop-color="#6366f1" stop-opacity="0"/></linearGradient></defs><polygon points="351.1,422 351.1,405.4 366.5,408.5 381.9,419.0 381.9,422" fill="url(#sg1)"/><polygon points="443.6,422 443.6,415.8 459.1,401.9 474.5,412.3 489.9,412.3 505.4,415.8 520.8,419.2 536.2,408.8 551.6,408.8 567.1,412.3 582.5,405.4 597.9,412.3 613.4,415.8 628.8,415.8 644.2,405.4 659.7,419.2 675.1,412.3 675.1,422" fill="url(#sg1)"/><polyline points="320.2,399.2 335.6,412.3 351.1,416.0 366.5,416.0" stroke="#9ca3af" stroke-width="1.1"/><polyline points="412.8,412.7 428.2,405.6 443.6,419.6 459.1,406.0 474.5,408.1 489.9,416.0 505.4,391.9 520.8,416.0 536.2,398.8 551.6,405.4 567.1,409.2 582.5,395.2 597.9,412.3 613.4,408.8 628.8,412.3 644.2,398.8 659.7,412.3 675.1,419.2" stroke="#9ca3af" stroke-width="1.1"/><polyline points="351.1,405.4 366.5,408.5 381.9,419.0" stroke="#4736f5" stroke-width="1.1"/><polyline points="443.6,415.8 459.1,401.9 474.5,412.3 489.9,412.3 505.4,415.8 520.8,419.2 536.2,408.8 551.6,408.8 567.1,412.3 582.5,405.4 597.9,412.3 613.4,415.8 628.8,415.8 644.2,405.4 659.7,419.2 675.1,412.3" stroke="#4736f5" stroke-width="1.1"/><circle cx="412.8" cy="412.7" r="3.5" fill="#4736f5"/></svg>
<span class="t" id="t64" style="font-size:13.7px;line-height:1;font-weight:400;color:#6b7280;top:428px;left:319.20px;letter-spacing:-0.037px;">Mar 19</span>
<span class="t" id="t65" style="font-size:13.7px;line-height:1;font-weight:400;color:#6b7280;top:428px;left:630.20px;letter-spacing:0.363px;">Mar 20</span>
<svg style="left:0;top:0" width="1920" height="959" viewBox="0 0 1920 959" fill="none"><defs><linearGradient id="sg2" gradientUnits="userSpaceOnUse" x1="0" y1="392" x2="0" y2="422"><stop offset="0" stop-color="#6366f1" stop-opacity=".2"/><stop offset="1" stop-color="#6366f1" stop-opacity="0"/></linearGradient></defs><polygon points="742.1,422 742.1,391.9 772.9,391.9 772.9,422" fill="url(#sg2)"/><polygon points="834.6,422 834.6,391.9 1066.1,391.9 1066.1,422" fill="url(#sg2)"/><polyline points="711.2,391.9 772.9,391.9" stroke="#9ca3af" stroke-width="1.1"/><polyline points="803.8,391.9 1066.1,391.9" stroke="#9ca3af" stroke-width="1.1"/><circle cx="803.8" cy="391.9" r="3.5" fill="#4736f5"/></svg>
<span class="t" id="t66" style="font-size:13.7px;line-height:1;font-weight:400;color:#6b7280;top:428px;left:710.20px;letter-spacing:-0.037px;">Mar 19</span>
<span class="t" id="t67" style="font-size:13.7px;line-height:1;font-weight:400;color:#6b7280;top:428px;left:1021.20px;letter-spacing:0.363px;">Mar 20</span>
<svg style="left:0;top:0" width="1920" height="959" viewBox="0 0 1920 959" fill="none"><path d="M711 391.9H757" stroke="#b9bfcc" stroke-width="1.3"/><path d="M757 391.9H772.9" stroke="#8f8df9" stroke-width="1.3"/><path d="M807 391.9H1066.1" stroke="#b9bfcc" stroke-width="1.3"/></svg>
<svg style="left:0;top:0" width="1920" height="959" viewBox="0 0 1920 959" fill="none"><defs><linearGradient id="sg3" gradientUnits="userSpaceOnUse" x1="0" y1="392" x2="0" y2="422"><stop offset="0" stop-color="#6366f1" stop-opacity=".2"/><stop offset="1" stop-color="#6366f1" stop-opacity="0"/></linearGradient></defs><polygon points="1133.8,422 1133.8,418.1 1164.6,418.1 1164.6,422" fill="url(#sg3)"/><polygon points="1226.3,422 1226.3,413.8 1241.8,413.8 1257.2,413.8 1272.6,413.8 1288.1,418.1 1303.5,418.1 1318.9,413.8 1334.4,409.6 1349.8,409.6 1365.2,405.0 1380.6,413.8 1396.1,413.8 1411.5,413.8 1426.9,413.8 1442.4,418.5 1457.8,409.6 1457.8,422" fill="url(#sg3)"/><polyline points="1102.9,409.6 1133.8,418.5 1149.2,413.8" stroke="#9ca3af" stroke-width="1.1"/><polyline points="1195.5,416.0 1210.9,409.6 1226.3,418.5 1241.8,413.8 1257.2,405.0 1272.6,413.8 1288.1,391.9 1303.5,418.5 1318.9,396.0 1334.4,409.6 1349.8,405.0 1365.2,400.4 1380.6,409.6 1396.1,409.6 1411.5,413.8 1426.9,396.0 1442.4,413.8 1457.8,418.5" stroke="#9ca3af" stroke-width="1.1"/><polyline points="1133.8,418.1 1164.6,418.1" stroke="#4736f5" stroke-width="1.1"/><polyline points="1226.3,413.8 1241.8,413.8 1257.2,413.8 1272.6,413.8 1288.1,418.1 1303.5,418.1 1318.9,413.8 1334.4,409.6 1349.8,409.6 1365.2,405.0 1380.6,413.8 1396.1,413.8 1411.5,413.8 1426.9,413.8 1442.4,418.5 1457.8,409.6" stroke="#4736f5" stroke-width="1.1"/><circle cx="1195.5" cy="418.5" r="3.5" fill="#4736f5"/></svg>
<span class="t" id="t68" style="font-size:13.7px;line-height:1;font-weight:400;color:#6b7280;top:428px;left:1101.90px;letter-spacing:-0.037px;">Mar 19</span>
<span class="t" id="t69" style="font-size:13.7px;line-height:1;font-weight:400;color:#6b7280;top:428px;left:1412.90px;letter-spacing:0.363px;">Mar 20</span>
<!-- chart -->
<div style="left:301px;top:484px;width:1176px;height:331.5px;background:#ffffff;border:1px solid #e5e7eb;border-radius:4px;"></div>
<span class="t" id="t70" style="font-size:17.2px;line-height:1;font-weight:400;color:#5b6474;-webkit-text-stroke:0.2px #5b6474;top:500px;left:319.70px;letter-spacing:0.239px;">Unique Projects &amp; Total Merge Commits over Time</span>
<span class="t" id="t71" style="font-size:13.1px;line-height:1;font-weight:400;color:#5b6575;top:531px;left:345.70px;letter-spacing:0.140px;">Measure</span>
<div style="left:346.7px;top:551.7px;width:12.4px;height:12.4px;background:#76dbfd;border-radius:7px;"></div>
<span class="t" id="t72" style="font-size:12.1px;line-height:1;font-weight:400;color:#5b6575;top:551px;left:364.40px;letter-spacing:-0.059px;">Unique Projects</span>
<div style="left:462.3px;top:551.7px;width:12.4px;height:12.4px;background:#5ba6b8;border-radius:7px;"></div>
<span class="t" id="t73" style="font-size:12.1px;line-height:1;font-weight:400;color:#5b6575;top:551px;left:479.50px;letter-spacing:-0.011px;">Total Merge Commits</span>
<svg style="left:0;top:0" width="1920" height="959" viewBox="0 0 1920 959" fill="none"><path d="M346.8 784.8H1442.5" stroke="#e7e9ed" stroke-width="1.1"/><path d="M346.8 744.9H1442.5" stroke="#e7e9ed" stroke-width="1.1"/><path d="M346.8 705.0H1442.5" stroke="#e7e9ed" stroke-width="1.1"/><path d="M346.8 665.2H1442.5" stroke="#e7e9ed" stroke-width="1.1"/><path d="M346.8 625.3H1442.5" stroke="#e7e9ed" stroke-width="1.1"/><path d="M346.8 585.4H1442.5" stroke="#e7e9ed" stroke-width="1.1"/><rect x="440.85" y="585" width="40.05" height="199.3" fill="#76dbfd"/><rect x="486.50" y="585" width="40.05" height="199.3" fill="#76dbfd"/><rect x="532.15" y="585" width="40.05" height="199.3" fill="#76dbfd"/><rect x="623.45" y="585" width="40.05" height="199.3" fill="#76dbfd"/><rect x="714.75" y="585" width="40.05" height="199.3" fill="#76dbfd"/><rect x="760.40" y="585" width="40.05" height="199.3" fill="#76dbfd"/><rect x="806.05" y="585" width="40.05" height="199.3" fill="#76dbfd"/><rect x="851.70" y="585" width="40.05" height="199.3" fill="#76dbfd"/><rect x="897.35" y="585" width="40.05" height="199.3" fill="#76dbfd"/><rect x="943.00" y="585" width="40.05" height="199.3" fill="#76dbfd"/><rect x="988.65" y="585" width="40.05" height="199.3" fill="#76dbfd"/><rect x="1034.30" y="585" width="40.05" height="199.3" fill="#76dbfd"/><rect x="1079.95" y="585" width="40.05" height="199.3" fill="#76dbfd"/><rect x="1125.60" y="585" width="40.05" height="199.3" fill="#76dbfd"/><rect x="1171.25" y="585" width="40.05" height="199.3" fill="#76dbfd"/><rect x="1216.90" y="585" width="40.05" height="199.3" fill="#76dbfd"/><rect x="1262.55" y="585" width="40.05" height="199.3" fill="#76dbfd"/><rect x="1308.20" y="585" width="40.05" height="199.3" fill="#76dbfd"/><rect x="1353.85" y="585" width="40.05" height="199.3" fill="#76dbfd"/><rect x="1399.50" y="585" width="40.05" height="199.3" fill="#76dbfd"/><path d="M460.93 625.10C476.14 625.10 491.36 625.10 506.58 625.10C521.79 625.10 537.01 684.80 552.23 744.50" stroke="#5ba1b3" stroke-width="1.9"/><path d="M734.83 704.70C750.04 664.90 765.26 625.10 780.48 625.10C795.69 625.10 810.91 744.50 826.12 744.50C841.34 744.50 856.56 744.50 871.78 744.50C886.99 744.50 902.21 744.50 917.42 744.50C932.64 744.50 947.86 744.50 963.08 744.50C978.29 744.50 993.51 744.50 1008.72 744.50C1023.94 744.50 1039.16 704.70 1054.38 704.70C1069.59 704.70 1084.81 744.50 1100.03 744.50C1115.24 744.50 1130.46 704.70 1145.67 704.70C1160.89 704.70 1176.11 704.70 1191.33 704.70C1206.54 704.70 1221.76 704.70 1236.97 704.70C1252.19 704.70 1267.41 744.50 1282.62 744.50C1297.84 744.50 1313.06 585.30 1328.28 585.30C1343.49 585.30 1358.71 744.50 1373.92 744.50C1389.14 744.50 1404.36 724.60 1419.57 704.70" stroke="#5ba1b3" stroke-width="1.9"/><clipPath id="plotclip"><rect x="340" y="585.0" width="1110" height="205"/></clipPath><g clip-path="url(#plotclip)"><circle cx="460.93" cy="625.10" r="3" fill="#5ba1b3"/><circle cx="506.58" cy="625.10" r="3" fill="#5ba1b3"/><circle cx="552.23" cy="744.50" r="3" fill="#5ba1b3"/><circle cx="643.52" cy="744.50" r="3" fill="#5ba1b3"/><circle cx="734.83" cy="704.70" r="3" fill="#5ba1b3"/><circle cx="780.48" cy="625.10" r="3" fill="#5ba1b3"/><circle cx="826.12" cy="744.50" r="3" fill="#5ba1b3"/><circle cx="871.78" cy="744.50" r="3" fill="#5ba1b3"/><circle cx="917.42" cy="744.50" r="3" fill="#5ba1b3"/><circle cx="963.08" cy="744.50" r="3" fill="#5ba1b3"/><circle cx="1008.72" cy="744.50" r="3" fill="#5ba1b3"/><circle cx="1054.38" cy="704.70" r="3" fill="#5ba1b3"/><circle cx="1100.03" cy="744.50" r="3" fill="#5ba1b3"/><circle cx="1145.67" cy="704.70" r="3" fill="#5ba1b3"/><circle cx="1191.33" cy="704.70" r="3" fill="#5ba1b3"/><circle cx="1236.97" cy="704.70" r="3" fill="#5ba1b3"/><circle cx="1282.62" cy="744.50" r="3" fill="#5ba1b3"/><circle cx="1328.28" cy="585.30" r="3" fill="#5ba1b3"/><circle cx="1373.92" cy="744.50" r="3" fill="#5ba1b3"/><circle cx="1419.57" cy="704.70" r="3" fill="#5ba1b3"/></g></svg>
<span class="t" id="t74" style="font-size:12.6px;line-height:1;font-weight:400;color:#6b7280;top:778px;left:329.10px;letter-spacing:-0.600px;">0</span>
<span class="t" id="t75" style="font-size:12.6px;line-height:1;font-weight:400;color:#6b7280;top:738px;left:318.70px;letter-spacing:-0.351px;">0.2</span>
<span class="t" id="t76" style="font-size:12.6px;line-height:1;font-weight:400;color:#6b7280;top:699px;left:318.70px;letter-spacing:-0.351px;">0.4</span>
<span class="t" id="t77" style="font-size:12.6px;line-height:1;font-weight:400;color:#6b7280;top:659px;left:318.70px;letter-spacing:-0.351px;">0.6</span>
<span class="t" id="t78" style="font-size:12.6px;line-height:1;font-weight:400;color:#6b7280;top:619px;left:318.70px;letter-spacing:-0.351px;">0.8</span>
<span class="t" id="t79" style="font-size:12.6px;line-height:1;font-weight:400;color:#6b7280;top:579px;left:329.10px;letter-spacing:-0.600px;">1</span>
<span class="t" id="t80" style="font-size:12.6px;line-height:1;font-weight:400;color:#6b7280;top:778px;left:1453.40px;letter-spacing:-0.400px;">0</span>
<span class="t" id="t81" style="font-size:12.6px;line-height:1;font-weight:400;color:#6b7280;top:738px;left:1453.40px;letter-spacing:-0.400px;">1</span>
<span class="t" id="t82" style="font-size:12.6px;line-height:1;font-weight:400;color:#6b7280;top:699px;left:1453.40px;letter-spacing:-0.400px;">2</span>
<span class="t" id="t83" style="font-size:12.6px;line-height:1;font-weight:400;color:#6b7280;top:659px;left:1453.40px;letter-spacing:-0.400px;">3</span>
<span class="t" id="t84" style="font-size:12.6px;line-height:1;font-weight:400;color:#6b7280;top:619px;left:1453.40px;letter-spacing:-0.400px;">4</span>
<span class="t" id="t85" style="font-size:12.6px;line-height:1;font-weight:400;color:#6b7280;top:579px;left:1453.40px;letter-spacing:-0.400px;">5</span>
<span class="t" id="t86" style="font-size:12.6px;line-height:1;font-weight:400;color:#6b7280;top:798px;left:347.30px;letter-spacing:0.322px;">23:00</span>
<span class="t" id="t87" style="font-size:12.6px;line-height:1;font-weight:400;color:#6b7280;top:798px;left:422.95px;letter-spacing:-0.303px;">01:00</span>
<span class="t" id="t88" style="font-size:12.6px;line-height:1;font-weight:400;color:#6b7280;top:798px;left:512.80px;letter-spacing:0.422px;">03:00</span>
<span class="t" id="t89" style="font-size:12.6px;line-height:1;font-weight:400;color:#6b7280;top:798px;left:604.45px;letter-spacing:0.247px;">05:00</span>
<span class="t" id="t90" style="font-size:12.6px;line-height:1;font-weight:400;color:#6b7280;top:798px;left:696.15px;letter-spacing:0.047px;">07:00</span>
<span class="t" id="t91" style="font-size:12.6px;line-height:1;font-weight:400;color:#6b7280;top:798px;left:786.90px;letter-spacing:0.322px;">09:00</span>
<span class="t" id="t92" style="font-size:12.6px;line-height:1;font-weight:400;color:#6b7280;top:798px;left:881.10px;letter-spacing:-0.894px;">11:00</span>
<span class="t" id="t93" style="font-size:12.6px;line-height:1;font-weight:400;color:#6b7280;top:798px;left:971.10px;letter-spacing:-0.478px;">13:00</span>
<span class="t" id="t94" style="font-size:12.6px;line-height:1;font-weight:400;color:#6b7280;top:798px;left:1062.45px;letter-spacing:-0.503px;">15:00</span>
<span class="t" id="t95" style="font-size:12.6px;line-height:1;font-weight:400;color:#6b7280;top:798px;left:1154.45px;letter-spacing:-0.853px;">17:00</span>
<span class="t" id="t96" style="font-size:12.6px;line-height:1;font-weight:400;color:#6b7280;top:798px;left:1244.85px;letter-spacing:-0.403px;">19:00</span>
<span class="t" id="t97" style="font-size:12.6px;line-height:1;font-weight:400;color:#6b7280;top:798px;left:1336.30px;letter-spacing:-0.478px;">21:00</span>
<span class="t" id="t98" style="font-size:12.6px;line-height:1;font-weight:400;color:#6b7280;top:798px;left:1409.20px;letter-spacing:0.272px;">23:00</span>
<!-- right panel -->
<div style="left:1505px;top:136px;width:397px;height:805px;background:#ffffff;border:1px solid #e5e7eb;border-radius:2px;"></div>
<div style="left:1506px;top:137px;width:395px;height:40px;background:#f9fafb;"></div>
<div style="left:1506px;top:177.3px;width:395px;height:1px;background:#e5e7eb;"></div>
<h2 class="t" id="t99" style="font-size:16.0px;line-height:1;font-weight:700;color:#111827;top:149px;left:1528.40px;letter-spacing:-0.245px;">Canvas</h2>
<label class="t" id="t100" style="font-size:13.7px;line-height:1;font-weight:500;color:#1f2937;-webkit-text-stroke:0.27px #1f2937;top:193px;left:1528.00px;letter-spacing:0.172px;">Display name</label>
<svg style="left:1617.9px;top:194.3px;" width="11.9" height="11.9" viewBox="0 0 24 24" fill="none" stroke="#4b5563" stroke-width="1.8" stroke-linecap="round" stroke-linejoin="round"><circle cx="12" cy="12" r="10"/><path d="M12 17.2v-6.4" stroke-width="2.3"/><circle cx="12" cy="7.3" r="1.35" fill="#4b5563" stroke="none"/></svg>
<div style="left:1528px;top:218.4px;width:351px;height:27.4px;background:#ffffff;border:1px solid #d1d5db;border-radius:2px;"></div>
<span class="t" id="t101" style="font-size:13.7px;line-height:1;font-weight:400;color:#1f2937;-webkit-text-stroke:0.12px #1f2937;top:226px;left:1538.30px;letter-spacing:0.029px;">Canvas Dashboard</span>
<div style="left:1506px;top:264px;width:395px;height:1px;background:#e5e7eb;"></div>
<label class="t" id="t102" style="font-size:13.7px;line-height:1;font-weight:500;color:#1f2937;-webkit-text-stroke:0.27px #1f2937;top:280px;left:1528.00px;letter-spacing:0.512px;">Max width</label>
<div style="left:1528px;top:304.3px;width:351px;height:27.4px;background:#ffffff;border:1px solid #d1d5db;border-radius:2px;"></div>
<span class="t" id="t103" style="font-size:13.7px;line-height:1;font-weight:400;color:#1f2937;-webkit-text-stroke:0.12px #1f2937;top:312px;left:1537.30px;letter-spacing:-0.246px;">1200</span>
<div style="left:1506px;top:350px;width:395px;height:1px;background:#e5e7eb;"></div>
<svg style="left:0;top:0" width="1920" height="959" viewBox="0 0 1920 959" fill="none"><rect x="1516.05" y="353.75" width="376.8" height="37" rx="18.5" fill="#ffffff" stroke="#0a3fae" stroke-width="3.1"/></svg>
<label class="t" id="t104" style="font-size:13.7px;line-height:1;font-weight:500;color:#1f2937;-webkit-text-stroke:0.27px #1f2937;top:366px;left:1528.00px;letter-spacing:0.217px;">Filter bar</label>
<div style="left:1854.8px;top:366px;width:24.3px;height:14.2px;background:#747bfb;border-radius:8px;"></div>
<div style="left:1866.6px;top:367.6px;width:11px;height:11px;background:#ffffff;border-radius:6px;"></div>
<div style="left:1703px;top:395.3px;width:176px;height:25.4px;background:#ffffff;border:1px solid #d1d5db;border-radius:0 2px 2px 0;"></div>
<div style="left:1528px;top:395.3px;width:176px;height:25.4px;background:#ffffff;border:1.4px solid #4f46e5;border-radius:2px 0 0 2px;"></div>
<span class="t" id="t105" style="font-size:13.7px;line-height:1;font-weight:400;color:#4736f5;-webkit-text-stroke:0.15px #4736f5;top:401px;left:1550.80px;letter-spacing:0.105px;">Default Time Ranges</span>
<span class="t" id="t106" style="font-size:13.7px;line-height:1;font-weight:400;color:#1f2937;-webkit-text-stroke:0.15px #1f2937;top:401px;left:1767.60px;letter-spacing:0.229px;">Custom</span>
<div style="left:1703px;top:435.3px;width:176px;height:25.6px;background:#ffffff;border:1px solid #d1d5db;border-radius:0 2px 2px 0;"></div>
<div style="left:1528px;top:435.3px;width:176px;height:25.6px;background:#ffffff;border:1.4px solid #4f46e5;border-radius:2px 0 0 2px;"></div>
<span class="t" id="t107" style="font-size:13.7px;line-height:1;font-weight:400;color:#4736f5;-webkit-text-stroke:0.15px #4736f5;top:441px;left:1554.80px;letter-spacing:0.172px;">Default Time Zones</span>
<span class="t" id="t108" style="font-size:13.7px;line-height:1;font-weight:400;color:#1f2937;-webkit-text-stroke:0.15px #1f2937;top:441px;left:1767.60px;letter-spacing:0.229px;">Custom</span>
<div style="left:1506px;top:483.2px;width:395px;height:1px;background:#e5e7eb;"></div>
<label class="t" id="t109" style="font-size:13.7px;line-height:1;font-weight:500;color:#1f2937;-webkit-text-stroke:0.27px #1f2937;top:499px;left:1529.10px;letter-spacing:0.103px;">Theme</label>
<svg style="left:1577.2px;top:500.1px;" width="11.9" height="11.9" viewBox="0 0 24 24" fill="none" stroke="#4b5563" stroke-width="1.8" stroke-linecap="round" stroke-linejoin="round"><circle cx="12" cy="12" r="10"/><path d="M12 17.2v-6.4" stroke-width="2.3"/><circle cx="12" cy="7.3" r="1.35" fill="#4b5563" stroke="none"/></svg>
<div style="left:1703px;top:524.4px;width:176px;height:25.3px;background:#ffffff;border:1px solid #d1d5db;border-radius:0 2px 2px 0;"></div>
<div style="left:1528px;top:524.4px;width:176px;height:25.3px;background:#ffffff;border:1.4px solid #4f46e5;border-radius:2px 0 0 2px;"></div>
<span class="t" id="t110" style="font-size:13.7px;line-height:1;font-weight:400;color:#4736f5;-webkit-text-stroke:0.15px #4736f5;top:530px;left:1592.40px;letter-spacing:0.074px;">Presets</span>
<span class="t" id="t111" style="font-size:13.7px;line-height:1;font-weight:400;color:#1f2937;-webkit-text-stroke:0.15px #1f2937;top:530px;left:1767.60px;letter-spacing:0.229px;">Custom</span>
<div style="left:1528px;top:563px;width:351px;height:26.7px;background:#ffffff;border:1px solid #d1d5db;border-radius:2px;"></div>
<span class="t" id="t112" style="font-size:13.7px;line-height:1;font-weight:400;color:#1f2937;-webkit-text-stroke:0.12px #1f2937;top:570px;left:1541.70px;letter-spacing:0.306px;">Default</span>
<svg style="left:1852.6px;top:570.6px;" width="12.4" height="12.4" viewBox="0 0 24 24" fill="none" stroke="#1f2937" stroke-width="2.2" stroke-linecap="round" stroke-linejoin="round"><path d="m6 9 6 6 6-6"/></svg>
<div style="left:1528px;top:598px;width:351px;height:26.6px;background:#f9fafb;border:1px solid #d1d5db;border-radius:2px;"></div>
<span class="t" id="t113" style="font-size:13.7px;line-height:1;font-weight:400;color:#6b7280;-webkit-text-stroke:0.1px #6b7280;top:605px;left:1534.00px;letter-spacing:0.233px;">Primary</span>
<span class="t" id="t114" style="font-size:13.7px;line-height:1;font-weight:400;color:#9ca3af;top:605px;left:1719.40px;letter-spacing:-0.019px;">hsl(240,100%,67%)</span>
<div style="left:1851.8px;top:605px;width:13.4px;height:12.9px;background:#5757ff;border-radius:2px;"></div>
<div style="left:1528px;top:634px;width:351px;height:25.8px;background:#f9fafb;border:1px solid #d1d5db;border-radius:2px;"></div>
<span class="t" id="t115" style="font-size:13.7px;line-height:1;font-weight:400;color:#6b7280;-webkit-text-stroke:0.1px #6b7280;top:640px;left:1535.00px;letter-spacing:0.088px;">Secondary</span>
<span class="t" id="t116" style="font-size:13.7px;line-height:1;font-weight:400;color:#9ca3af;top:640px;left:1723.10px;letter-spacing:-0.250px;">hsl(197,100%,50%)</span>
<div style="left:1851.8px;top:641px;width:13.4px;height:12.9px;background:#1fb6ff;border-radius:2px;"></div>
</body>
</html>
